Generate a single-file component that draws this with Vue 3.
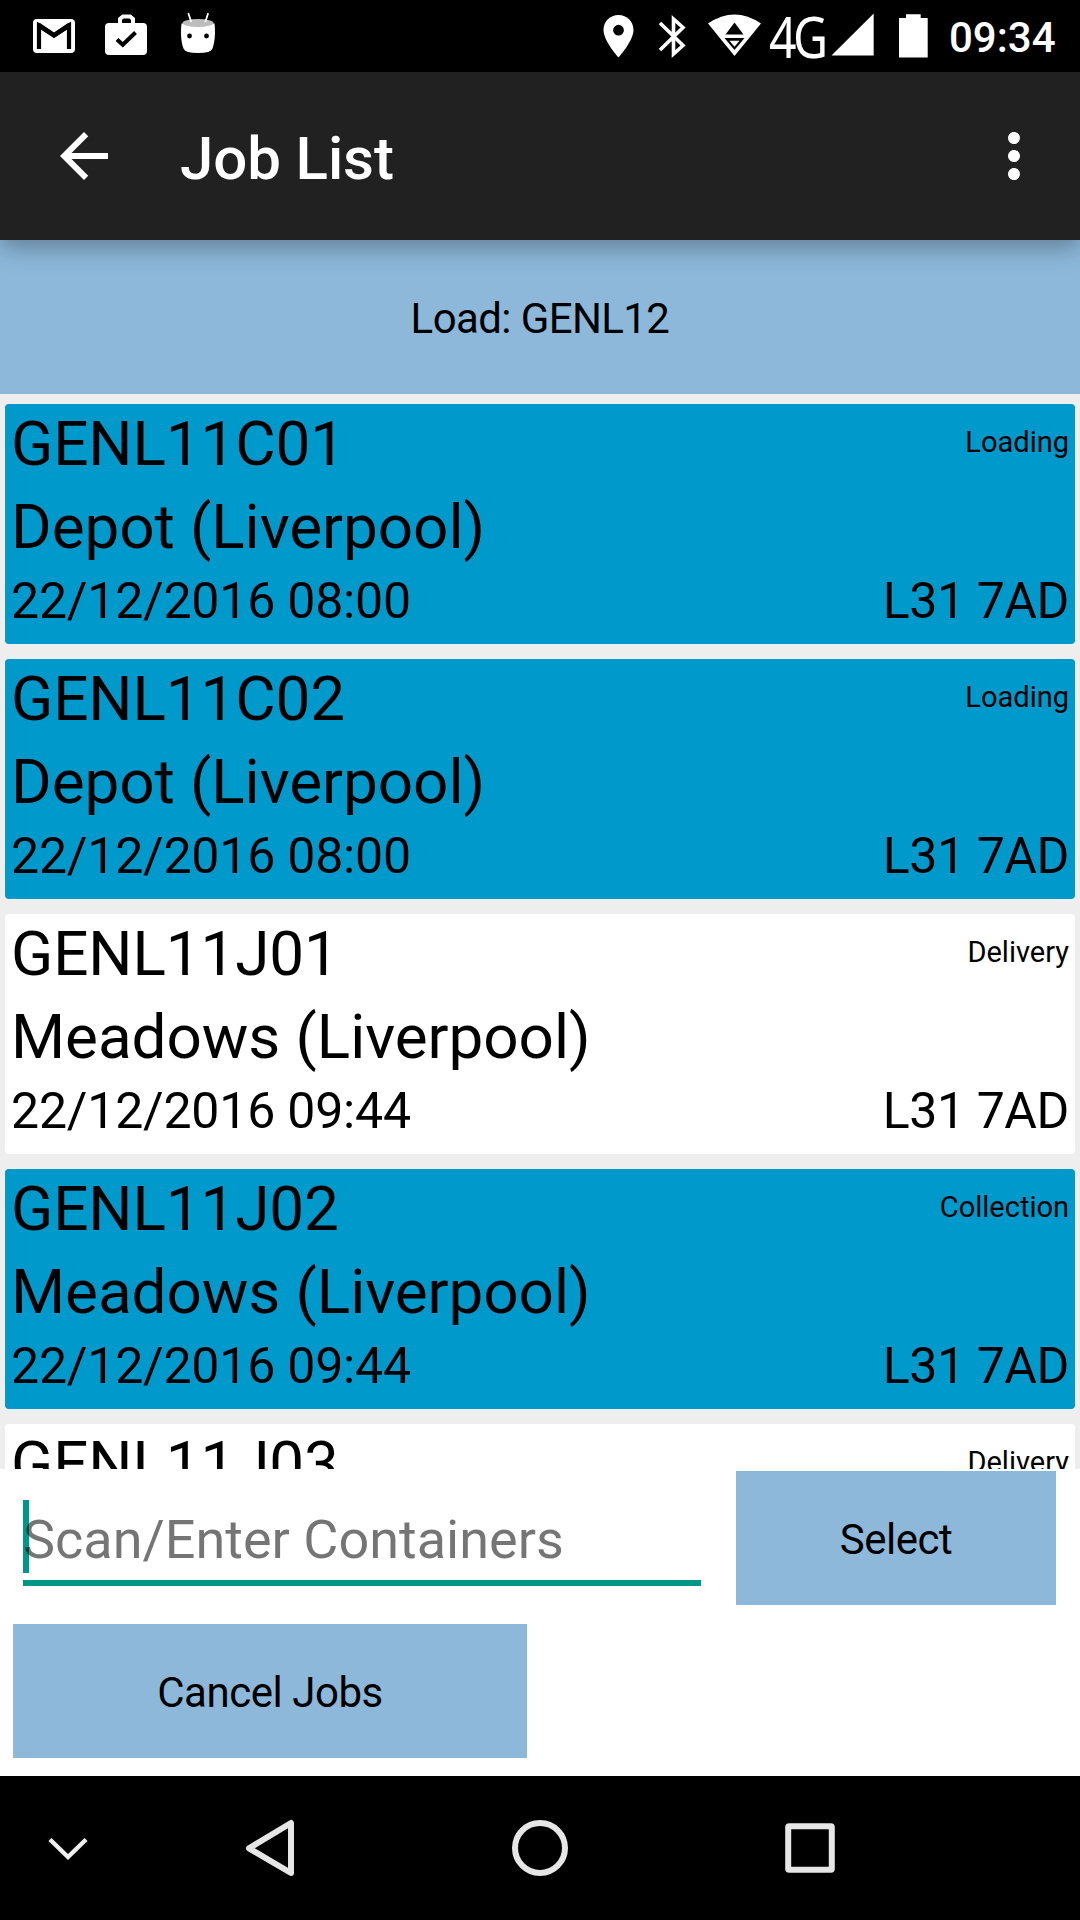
<script setup>
import { ref } from "vue";

const load = ref("GENL12");
const container = ref("");

const jobs = ref([
  { id: "GENL11C01", type: "Loading", place: "Depot (Liverpool)", date: "22/12/2016 08:00", postcode: "L31 7AD", done: true },
  { id: "GENL11C02", type: "Loading", place: "Depot (Liverpool)", date: "22/12/2016 08:00", postcode: "L31 7AD", done: true },
  { id: "GENL11J01", type: "Delivery", place: "Meadows (Liverpool)", date: "22/12/2016 09:44", postcode: "L31 7AD", done: false },
  { id: "GENL11J02", type: "Collection", place: "Meadows (Liverpool)", date: "22/12/2016 09:44", postcode: "L31 7AD", done: true },
  { id: "GENL11J03", type: "Delivery", place: "Meadows (Liverpool)", date: "22/12/2016 09:44", postcode: "L31 7AD", done: false },
]);
</script>

<template>
  <div class="screen">
    <div class="statusbar">
      <div class="notifications">
        <!-- mail -->
        <svg width="48" height="72" viewBox="0 0 48 72">
          <rect x="3" y="19" width="42" height="34" rx="4" fill="#fff" />
          <path d="M9 49V25.500L24 35.500L39 25.500V49" fill="none" stroke="#000" stroke-width="4.200" />
          <path d="M7 23H10L24 32.500L38 23H41V27L24 38L7 27Z" fill="#000" />
        </svg>
        <!-- work profile -->
        <svg width="48" height="72" viewBox="0 0 48 72">
          <path d="M18 24V19L21 16.500H28L31 19V24" fill="none" stroke="#fff" stroke-width="4" />
          <rect x="3" y="23" width="42" height="32" rx="4" fill="#fff" />
          <path d="M15 39.500L20.800 44.800L33.500 32.500" fill="none" stroke="#000" stroke-width="4" />
        </svg>
        <!-- android head -->
        <svg width="48" height="72" viewBox="0 0 48 72">
          <path d="M7.500 23.500H40.500C41.500 32 41 42 38.500 48.500Q37 53 24 53Q11 53 9.500 48.500C7 42 6.500 32 7.500 23.500Z" fill="#fff" />
          <ellipse cx="24" cy="23" rx="15.500" ry="4" fill="#bdbdbd" />
          <path d="M14.500 13.800L17 21.200M34 13.800L31.500 21.200" stroke="#fff" stroke-width="1.800" stroke-linecap="round" />
          <circle cx="15.500" cy="36" r="2.400" fill="#000" />
          <circle cx="32.500" cy="36" r="2.400" fill="#000" />
        </svg>
      </div>
      <div class="system">
        <!-- location -->
        <svg width="42" height="72" viewBox="598 0 42 72">
          <path fill="#fff" fill-rule="evenodd" d="M618.500 15C610 15 603.500 21.500 603.500 30C603.500 41 618.500 57.500 618.500 57.500S633.500 41 633.500 30C633.500 21.500 627 15 618.500 15ZM618.500 24.800A5.400 5.400 0 1 1 618.500 35.600A5.400 5.400 0 1 1 618.500 24.800Z" />
        </svg>
        <!-- bluetooth -->
        <svg width="60" height="72" viewBox="640 0 60 72">
          <path d="M660 23L683 45.500L673.500 54V19L683 27.500L660 50" fill="none" stroke="#fff" stroke-width="3.600" />
        </svg>
        <!-- wifi with traffic arrows -->
        <svg width="66" height="72" viewBox="700 0 66 72">
          <path d="M708 23.500Q734.500 5.500 761 23.500L734.500 56Z" fill="#fff" />
          <path d="M734.500 22.500L743.500 34.500H725.500ZM724.500 38H744.500L734.500 50Z" fill="#000" />
          <path d="M729.500 40.800H739.500L734.500 46.800Z" fill="#fff" />
        </svg>
        <span class="network">4G</span>
        <!-- signal -->
        <svg width="50" height="72" viewBox="830 0 50 72">
          <path d="M831.500 55.500H873.700V13.500Z" fill="#fff" />
        </svg>
        <!-- battery -->
        <svg width="60" height="72" viewBox="880 0 60 72">
          <path d="M906 14.300H920.700V18H927.700V57.500H899V18H906Z" fill="#fff" />
        </svg>
        <span class="clock">09:34</span>
      </div>
    </div>

    <header class="toolbar">
      <svg class="back" width="72" height="72" viewBox="0 0 24 24">
        <path fill="#fff" d="M20 11H7.830l5.590-5.590L12 4l-8 8 8 8 1.410-1.410L7.830 13H20v-2z" />
      </svg>
      <h1 class="heading">Job List</h1>
      <svg class="more" width="72" height="72" viewBox="0 0 24 24">
        <path fill="#fff" d="M12 8c1.100 0 2-.9 2-2s-.9-2-2-2-2 .9-2 2 .9 2 2 2zm0 2c-1.100 0-2 .9-2 2s.9 2 2 2 2-.9 2-2-.9-2-2-2zm0 6c-1.100 0-2 .9-2 2s.9 2 2 2 2-.9 2-2-.9-2-2-2z" />
      </svg>
    </header>

    <div class="load"><span>Load: {{ load }}</span></div>

    <div class="jobs">
      <div v-for="job in jobs" :key="job.id" class="job" :class="{ done: job.done }">
        <div class="row">
          <span class="id">{{ job.id }}</span>
          <span class="type">{{ job.type }}</span>
        </div>
        <div class="place">{{ job.place }}</div>
        <div class="row details">
          <span class="date">{{ job.date }}</span>
          <span class="postcode">{{ job.postcode }}</span>
        </div>
      </div>
    </div>

    <div class="form">
      <div class="entry">
        <div class="field">
          <span class="caret"></span>
          <input v-model="container" class="scan" placeholder="Scan/Enter Containers" />
        </div>
        <button class="button select"><span>Select</span></button>
      </div>
      <button class="button cancel"><span>Cancel Jobs</span></button>
    </div>

    <nav class="navbar">
      <svg width="136" height="144" viewBox="0 0 136 144">
        <path d="M50 63.500L68 81L86 63.500" fill="none" stroke="#f0f0f0" stroke-width="4.400" />
      </svg>
      <svg width="268" height="144" viewBox="136 0 268 144">
        <path d="M291 47V97L249 72.300Z" fill="none" stroke="#e6e6e6" stroke-width="6" stroke-linejoin="round" />
      </svg>
      <svg width="272" height="144" viewBox="404 0 272 144">
        <circle cx="540" cy="72" r="25" fill="none" stroke="#e6e6e6" stroke-width="6" />
      </svg>
      <svg width="268" height="144" viewBox="676 0 268 144">
        <rect x="788.200" y="50.200" width="43.600" height="43.600" rx="1" fill="none" stroke="#e6e6e6" stroke-width="6" />
      </svg>
    </nav>
  </div>
</template>

<style>
body {
  margin: 0;
}
</style>

<style scoped>
.screen {
  width: 1080px;
  height: 1920px;
  display: flex;
  flex-direction: column;
  overflow: hidden;
  background-color: #eee;
  color: #000;
  font-family: Roboto, sans-serif;
}

svg {
  display: block;
  flex-shrink: 0;
}

.statusbar {
  height: 72px;
  flex-shrink: 0;
  display: flex;
  justify-content: space-between;
  background-color: #000;
  color: #fff;
}

.notifications {
  display: flex;
  gap: 24px;
  padding-left: 30px;
}

.system {
  display: flex;
  width: 482px;
}

.network {
  width: 76px;
  height: 72px;
  margin-right: -12px;
  flex-shrink: 0;
  font-family: "Noto Sans", sans-serif;
  font-size: 56px;
  line-height: 72px;
  letter-spacing: -4px;
  white-space: nowrap;
  /* condensed, like the system glyph */
  transform: translateX(3px) scaleX(0.86);
  transform-origin: left center;
}

.clock {
  padding-left: 9px;
  font-size: 42px;
  font-weight: 500;
  line-height: 75px;
}

.toolbar {
  height: 168px;
  flex-shrink: 0;
  display: flex;
  align-items: center;
  position: relative;
  background-color: #212121;
  color: #fff;
  box-shadow: 0 6px 24px rgba(0, 0, 0, 0.34);
}

.back {
  margin-left: 48px;
}

.heading {
  margin: 0 0 0 60px;
  padding-top: 5px;
  font-size: 60px;
  font-weight: 500;
  line-height: 72px;
  letter-spacing: -0.1px;
}

.more {
  margin-left: auto;
  margin-right: 30px;
}

.load {
  height: 154px;
  box-sizing: border-box;
  padding-top: 4px;
  flex-shrink: 0;
  display: flex;
  align-items: center;
  justify-content: center;
  background-color: #8db8da;
  font-size: 42px;
  line-height: 50px;
  letter-spacing: -0.6px;
}

.jobs {
  height: 1065px;
  padding: 10px 5px 0;
  flex-shrink: 0;
  display: flex;
  flex-direction: column;
  gap: 15px;
  overflow: hidden;
}

.job {
  height: 240px;
  box-sizing: border-box;
  padding: 0 6px;
  flex-shrink: 0;
  border-radius: 4px;
  background-color: #fff;
}

.job.done {
  background-color: #0099cc;
}

.row {
  display: flex;
  justify-content: space-between;
}

.id {
  font-size: 62px;
  line-height: 80px;
  letter-spacing: -0.1px;
}

.type {
  font-size: 29px;
  line-height: 76px;
}

.place {
  font-size: 62px;
  line-height: 86px;
  letter-spacing: -0.05px;
}

.details {
  font-size: 50px;
  line-height: 62px;
}

.date {
  letter-spacing: -0.2px;
}

.postcode {
  letter-spacing: -0.4px;
}

.form {
  height: 307px;
  flex-shrink: 0;
  box-sizing: border-box;
  padding: 2px 24px 0 13px;
  background-color: #fff;
}

.entry {
  display: flex;
  justify-content: space-between;
  margin-bottom: 19px;
}

.field {
  width: 678px;
  height: 86px;
  box-sizing: border-box;
  margin: 29px 0 0 10px;
  display: flex;
  position: relative;
  border-bottom: 6px solid #009688;
}

.caret {
  position: absolute;
  left: 0;
  top: 0;
  width: 6px;
  height: 73px;
  background-color: #009688;
}

.scan {
  width: 100%;
  height: 78px;
  box-sizing: border-box;
  padding: 0;
  border: none;
  outline: none;
  position: relative;
  background: transparent;
  font-family: inherit;
  font-size: 54px;
}

.scan::placeholder {
  color: rgba(0, 0, 0, 0.54);
  opacity: 1;
}

.button {
  height: 134px;
  padding: 3px 0 0;
  border: none;
  background-color: #8db8da;
  color: #000;
  font-family: inherit;
  font-size: 42px;
  letter-spacing: -0.45px;
}

.select {
  width: 320px;
}

.cancel {
  width: 514px;
  display: block;
}

.navbar {
  height: 144px;
  flex-shrink: 0;
  display: flex;
  background-color: #000;
}
</style>
